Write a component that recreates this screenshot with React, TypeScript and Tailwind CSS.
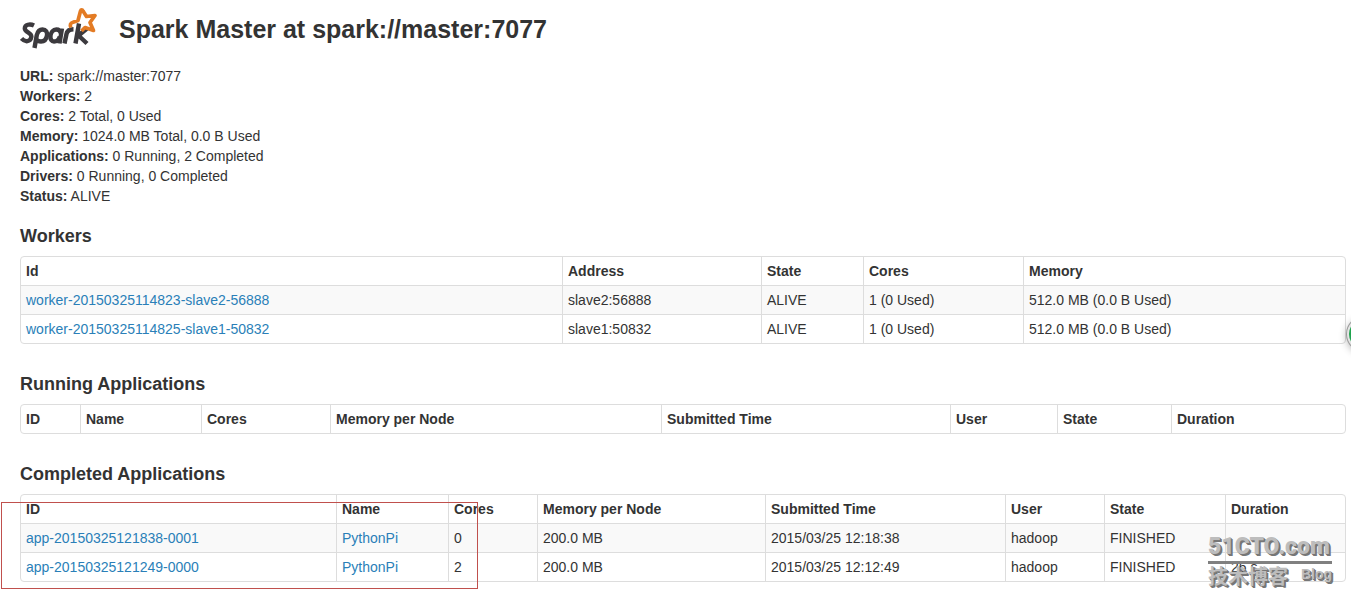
import React from "react";

type Cell = { text: string; href?: string };
type Column = { label: string; width: string };

const summary: [string, string][] = [
  ["URL:", "spark://master:7077"],
  ["Workers:", "2"],
  ["Cores:", "2 Total, 0 Used"],
  ["Memory:", "1024.0 MB Total, 0.0 B Used"],
  ["Applications:", "0 Running, 2 Completed"],
  ["Drivers:", "0 Running, 0 Completed"],
  ["Status:", "ALIVE"],
];

const workerColumns: Column[] = [
  { label: "Id", width: "w-[541px]" },
  { label: "Address", width: "w-[199px]" },
  { label: "State", width: "w-[102px]" },
  { label: "Cores", width: "w-[160px]" },
  { label: "Memory", width: "w-[322px]" },
];

const workerRows: Cell[][] = [
  [
    { text: "worker-20150325114823-slave2-56888", href: "#worker-slave2" },
    { text: "slave2:56888" },
    { text: "ALIVE" },
    { text: "1 (0 Used)" },
    { text: "512.0 MB (0.0 B Used)" },
  ],
  [
    { text: "worker-20150325114825-slave1-50832", href: "#worker-slave1" },
    { text: "slave1:50832" },
    { text: "ALIVE" },
    { text: "1 (0 Used)" },
    { text: "512.0 MB (0.0 B Used)" },
  ],
];

const runningColumns: Column[] = [
  { label: "ID", width: "w-[59px]" },
  { label: "Name", width: "w-[121px]" },
  { label: "Cores", width: "w-[129px]" },
  { label: "Memory per Node", width: "w-[331px]" },
  { label: "Submitted Time", width: "w-[289px]" },
  { label: "User", width: "w-[107px]" },
  { label: "State", width: "w-[114px]" },
  { label: "Duration", width: "w-[174px]" },
];

const completedColumns: Column[] = [
  { label: "ID", width: "w-[315px]" },
  { label: "Name", width: "w-[112px]" },
  { label: "Cores", width: "w-[89px]" },
  { label: "Memory per Node", width: "w-[228px]" },
  { label: "Submitted Time", width: "w-[240px]" },
  { label: "User", width: "w-[99px]" },
  { label: "State", width: "w-[121px]" },
  { label: "Duration", width: "w-[120px]" },
];

const completedRows: Cell[][] = [
  [
    { text: "app-20150325121838-0001", href: "#app-0001" },
    { text: "PythonPi", href: "#app-0001-detail" },
    { text: "0" },
    { text: "200.0 MB" },
    { text: "2015/03/25 12:18:38" },
    { text: "hadoop" },
    { text: "FINISHED" },
    { text: "" },
  ],
  [
    { text: "app-20150325121249-0000", href: "#app-0000" },
    { text: "PythonPi", href: "#app-0000-detail" },
    { text: "2" },
    { text: "200.0 MB" },
    { text: "2015/03/25 12:12:49" },
    { text: "hadoop" },
    { text: "FINISHED" },
    { text: "26 s" },
  ],
];

function SparkLogo() {
  return (
    <svg viewBox="0 0 78 42" className="h-[42px] w-[78px] shrink-0" role="img" aria-label="Spark">
      <g fill="none" stroke="#3c3a3e" strokeWidth="4.4" strokeLinejoin="round">
        <path d="M14 18.500C10 16.500 4.800 17.500 4.800 21.500C4.800 25.500 12 25.500 11.300 30C10.500 35 5 35.500 1.500 31.500" />
        <path d="M14.500 41L16.800 28C17.700 24.500 20 22.500 22.500 22.500C26 22.500 27.500 25 27 28.500C26.300 32.500 24 34.500 21 34.500C19 34.500 17.500 34 16.500 32.500" />
        <path d="M42 21.500L39.500 36.500M41 26.500C40.500 24 38.500 22.500 36.300 22.500C33 22.500 31 25.500 30.500 28.500C30 32.500 31.800 34.500 34 34.500C36.500 34.500 39 32.500 39.800 29.500" />
        <path d="M44.500 36.500L46.500 27C47.200 24 49.500 22.300 53.500 22.300" />
        <path d="M59 16.500L55.500 36.500M67 21.500L58.500 28.500L67 36.500" />
      </g>
      <path
        d="M51 20.500C49.500 18 50.500 16 53 15.300L58 13.500L60.500 4C61 2.500 62.300 2.500 63 4L66.500 9.500L75 8.500L70 15.500L73.500 23.500L65 20.500L61.500 24"
        fill="none"
        stroke="#e37b24"
        strokeWidth="3.700"
        strokeLinejoin="round"
      />
    </svg>
  );
}

function DataTable({ label, columns, rows }: { label: string; columns: Column[]; rows: Cell[][] }) {
  return (
    <table
      aria-label={label}
      className="w-full table-fixed border-separate border-spacing-0 rounded border border-[#dddddd] text-left"
    >
      <colgroup>
        {columns.map((c) => (
          <col key={c.label} className={c.width} />
        ))}
      </colgroup>
      <thead>
        <tr>
          {columns.map((c) => (
            <th key={c.label} scope="col" className="border-l border-[#dddddd] px-[5px] py-1 font-bold first:border-l-0">
              {c.label}
            </th>
          ))}
        </tr>
      </thead>
      <tbody>
        {rows.map((row, i) => (
          <tr key={i} className="odd:bg-[#f9f9f9]">
            {row.map((cell, j) => (
              <td key={j} className="border-t border-l border-[#dddddd] px-[5px] py-1 first:border-l-0">
                {cell.href ? (
                  <a href={cell.href} className="text-[#2a7fb8] hover:underline">
                    {cell.text}
                  </a>
                ) : (
                  cell.text
                )}
              </td>
            ))}
          </tr>
        ))}
      </tbody>
    </table>
  );
}

function Section({ title, columns, rows }: { title: string; columns: Column[]; rows: Cell[][] }) {
  return (
    <section>
      <h4 className="mb-2.5 text-[18px] leading-5 font-bold">{title}</h4>
      <DataTable label={title} columns={columns} rows={rows} />
    </section>
  );
}

function Watermark() {
  return (
    <div className="pointer-events-none absolute right-[14px] -bottom-1.5 w-[124px] font-bold whitespace-nowrap text-[#bdbdbd] [text-shadow:1px_1px_0_#777777,2px_2px_0_#777777]">
      <div className="border-b-3 border-[#808080] font-[Roboto,'Liberation_Sans',sans-serif] text-[23px] leading-7 font-black">
        51CTO.com
      </div>
      <div className="flex justify-between">
        <span className="font-['Noto_Sans_CJK_SC',sans-serif] text-[20px] leading-6">技术博客</span>
        <span className="text-[14px] leading-5">Blog</span>
      </div>
    </div>
  );
}

export default function App() {
  return (
    <div className="relative min-h-screen overflow-hidden bg-white pr-[5px] pl-5 font-['Liberation_Sans',Arial,sans-serif] text-[14px] leading-5 text-[#333333]">
      <header className="flex items-center gap-[21px] pt-[7px]">
        <SparkLogo />
        <h3 className="pt-0.5 text-[25px] leading-10 font-bold">Spark Master at spark://master:7077</h3>
      </header>

      <ul className="mt-[17px] mb-5">
        {summary.map(([name, value]) => (
          <li key={name}>
            <strong>{name}</strong> {value}
          </li>
        ))}
      </ul>

      <main className="flex flex-col gap-[30px]">
        <Section title="Workers" columns={workerColumns} rows={workerRows} />
        <Section title="Running Applications" columns={runningColumns} rows={[]} />
        <div className="relative">
          <Section title="Completed Applications" columns={completedColumns} rows={completedRows} />
          <div className="pointer-events-none absolute top-[38px] -bottom-[7px] -left-[19px] w-[477px] border border-[#c0504d]" />
          <Watermark />
        </div>
      </main>

      <button
        type="button"
        aria-label="Open side panel"
        className="absolute top-[317px] -right-[30px] size-[34px] rounded-full border-2 border-[#e5e5e5] bg-[#1fa34e] shadow-[0_2px_8px_#00000055] ring-1 ring-[#999999]"
      />
    </div>
  );
}
